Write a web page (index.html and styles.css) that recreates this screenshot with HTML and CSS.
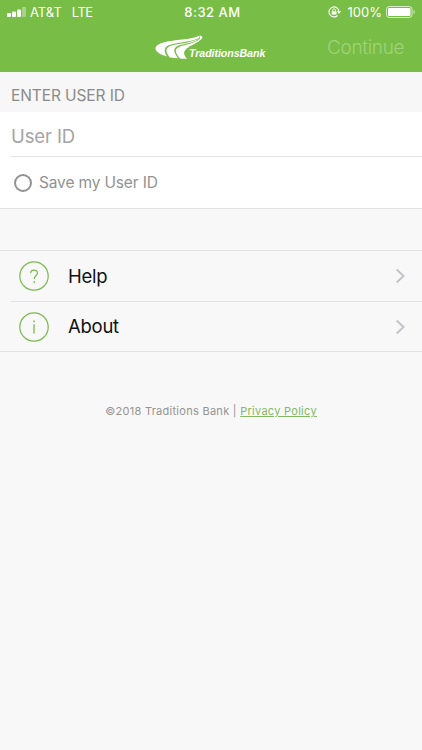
FILE: index.html
```html
<!DOCTYPE html>
<html lang="en">
<head>
<meta charset="utf-8">
<title>Traditions Bank</title>
<link rel="stylesheet" href="styles.css">
</head>
<body>
<header class="top">
  <div class="status">
    <div class="carrier">
      <svg class="signal" width="19" height="12" viewBox="0 0 19 12" fill="#fff"><rect x="0" y="7" width="4" height="4" rx="1"/><rect x="5" y="5.5" width="4" height="5.5" rx="1"/><rect x="10" y="3.5" width="4" height="7.5" rx="1"/><rect x="15" y="1" width="4" height="10" rx="1" opacity=".35"/></svg>
      <span class="name">AT&amp;T</span><span class="network">LTE</span>
    </div>
    <div class="time">8:32 AM</div>
    <div class="power">
      <svg class="lock" width="13" height="12" viewBox="0 0 13 12" fill="none" stroke="#fff"><path d="M9.5 9.5A5 5 0 1 1 11 5.5" stroke-width="1.1"/><path d="M9 5.3h4l-2 2.7z" fill="#fff" stroke="none"/><rect x="3.7" y="5.3" width="4.8" height="3.3" fill="#fff" stroke="none"/><path d="M4.7 5.6V4.3a1.4 1.4 0 0 1 2.8 0v1.3" stroke-width=".9"/></svg>
      <span class="percent">100%</span>
      <svg class="battery" width="30" height="12" viewBox="0 0 30 12"><rect x=".5" y=".5" width="25.5" height="11" rx="2.7" fill="none" stroke="#fff" stroke-opacity=".7"/><rect x="2" y="2" width="22.5" height="8" rx="1.2" fill="#fff"/><path d="M27.5 4v4q1.5-.5 1.5-2t-1.5-2z" fill="#fff" opacity=".6"/></svg>
    </div>
  </div>
  <div class="nav">
    <div class="brand">
      <svg class="mark" width="48" height="25" viewBox="0 0 48 25" fill="#fff"><path d="M45 .5L44 3C37 6.500 26 7 17 9.200C9 11.200 8 15 12 21.500C6 19.800 .5 17 .5 13.500C1 7.500 15 6 27 4.600C34 3.800 41 2.500 45 .5Z"/><path d="M46 2.500C38 9 30 8 23.500 10.600C17.500 13 18.500 17.500 23 23.300C20 23 17 22.700 14.500 22.200C9.500 15.500 10.500 12.300 17.500 10.300C27 8.100 38 7.500 46 2.500Z"/><path d="M45 .5L47.500 1.700L46.800 3.800C42 8.300 37 10 33.500 12.200C28.500 15.400 27.500 18.500 32 23.800C29.500 23.800 27 23.700 25 23.500C20 17.500 19 14 24.500 11.700C31 9.300 38 9.500 45 3.800Z"/></svg>
      <span class="brand-name">TraditionsBank</span>
    </div>
    <span class="continue">Continue</span>
  </div>
</header>
<main>
  <h1 class="section-title"><span>ENTER USER ID</span></h1>
  <section class="form">
    <div class="field"><span>User ID</span></div>
    <label class="save"><i class="radio"></i><span>Save my User ID</span></label>
  </section>
  <nav class="menu">
    <a class="item"><svg class="icon" width="30" height="30" viewBox="0 0 30 30" fill="none" stroke="#78b94c"><circle cx="15" cy="15" r="14.200" stroke-width="1.200"/><path d="M11.700 12.200C11.700 8.200 18.500 8.100 18.500 12C18.500 14.600 15.200 14.500 15.200 18" stroke-width="1.200"/><path d="M15.200 20.200v1.700" stroke-width="1.500"/></svg><span class="label help">Help</span><svg class="chevron" width="10" height="16" viewBox="0 0 10 16" fill="none" stroke="#c4c4c8" stroke-width="2"><path d="M1.700 1.500L8.500 8l-6.800 6.500"/></svg></a>
    <a class="item"><svg class="icon" width="30" height="30" viewBox="0 0 30 30" fill="none" stroke="#78b94c"><circle cx="15" cy="15" r="14.200" stroke-width="1.200"/><path d="M15 12.200v9.300" stroke-width="1.300"/><path d="M15 8.500v1.700" stroke-width="1.500"/></svg><span class="label about">About</span><svg class="chevron" width="10" height="16" viewBox="0 0 10 16" fill="none" stroke="#c4c4c8" stroke-width="2"><path d="M1.700 1.500L8.500 8l-6.800 6.500"/></svg></a>
  </nav>
</main>
<footer class="legal"><span>©2018 Traditions Bank | <a class="policy">Privacy Policy</a></span></footer>
</body>
</html>
```
FILE: styles.css
```css
* { box-sizing: border-box; }
body { margin: 0; height: 750px; overflow: hidden; background: #f8f8f8; font-family: Inter, "Liberation Sans", sans-serif; color: #111; }
.top { height: 72px; background: #78bd45; color: #fff; }
.status { display: grid; grid-template-columns: 1fr 1fr 1fr; height: 24px; align-items: center; font-size: 13px; line-height: 24px; }
.carrier { display: flex; align-items: center; padding-left: 7px; }
.name { margin-left: 4px; }
.network { margin-left: 10px; letter-spacing: -.5px; }
.time { text-align: center; font-weight: 500; letter-spacing: .5px; padding-left: 3px; }
.power { display: flex; align-items: center; justify-content: flex-end; padding-right: 6px; }
.percent { margin: 0 4px 0 7px; }
.nav { display: flex; height: 48px; justify-content: space-between; padding: 0 18px 0 155px; }
.brand { display: flex; padding-top: 11px; }
.brand-name { margin: 11px 0 0 -14px; height: 14px; font: italic 700 10.6px/14px "Liberation Sans", sans-serif; letter-spacing: -.05px; }
.continue { font-size: 19px; line-height: 47px; font-weight: 300; letter-spacing: -.3px; margin-right: -.3px; color: #a0d37d; }
.section-title { margin: 0; height: 40px; padding-left: 11px; background: #f7f7f7; color: #8b8b8b; font-size: 15.500px; line-height: 48px; font-weight: 400; letter-spacing: -.1px; }
.form { height: 97px; background: #fff; border-bottom: 1px solid #e2e2e2; }
.field { margin-left: 11px; height: 45px; border-bottom: 1px solid #e2e2e2; font-size: 18.500px; line-height: 48px; letter-spacing: -.1px; color: #a4a4a4; }
.save { display: flex; align-items: center; height: 51px; padding-left: 14px; color: #929292; font-size: 15.500px; letter-spacing: -.15px; }
.radio { width: 18px; height: 18px; margin-right: 7px; border: 2px solid #929292; border-radius: 50%; }
.menu { margin-top: 41px; border-top: 1px solid #e2e2e2; border-bottom: 1px solid #e2e2e2; }
.item { display: flex; align-items: center; height: 50px; margin-left: 11px; padding: 0 17px 0 8px; }
.item + .item { border-top: 1px solid #e2e2e2; }
.label { margin: 0 0 1px 19px; flex: 1; font-size: 18.500px; letter-spacing: -.25px; }
.legal { display: flex; justify-content: center; margin-top: 51px; height: 16px; font-size: 11px; line-height: 16px; color: #949494; letter-spacing: .28px; }
.policy { color: #85b965; text-decoration: underline; }
```
